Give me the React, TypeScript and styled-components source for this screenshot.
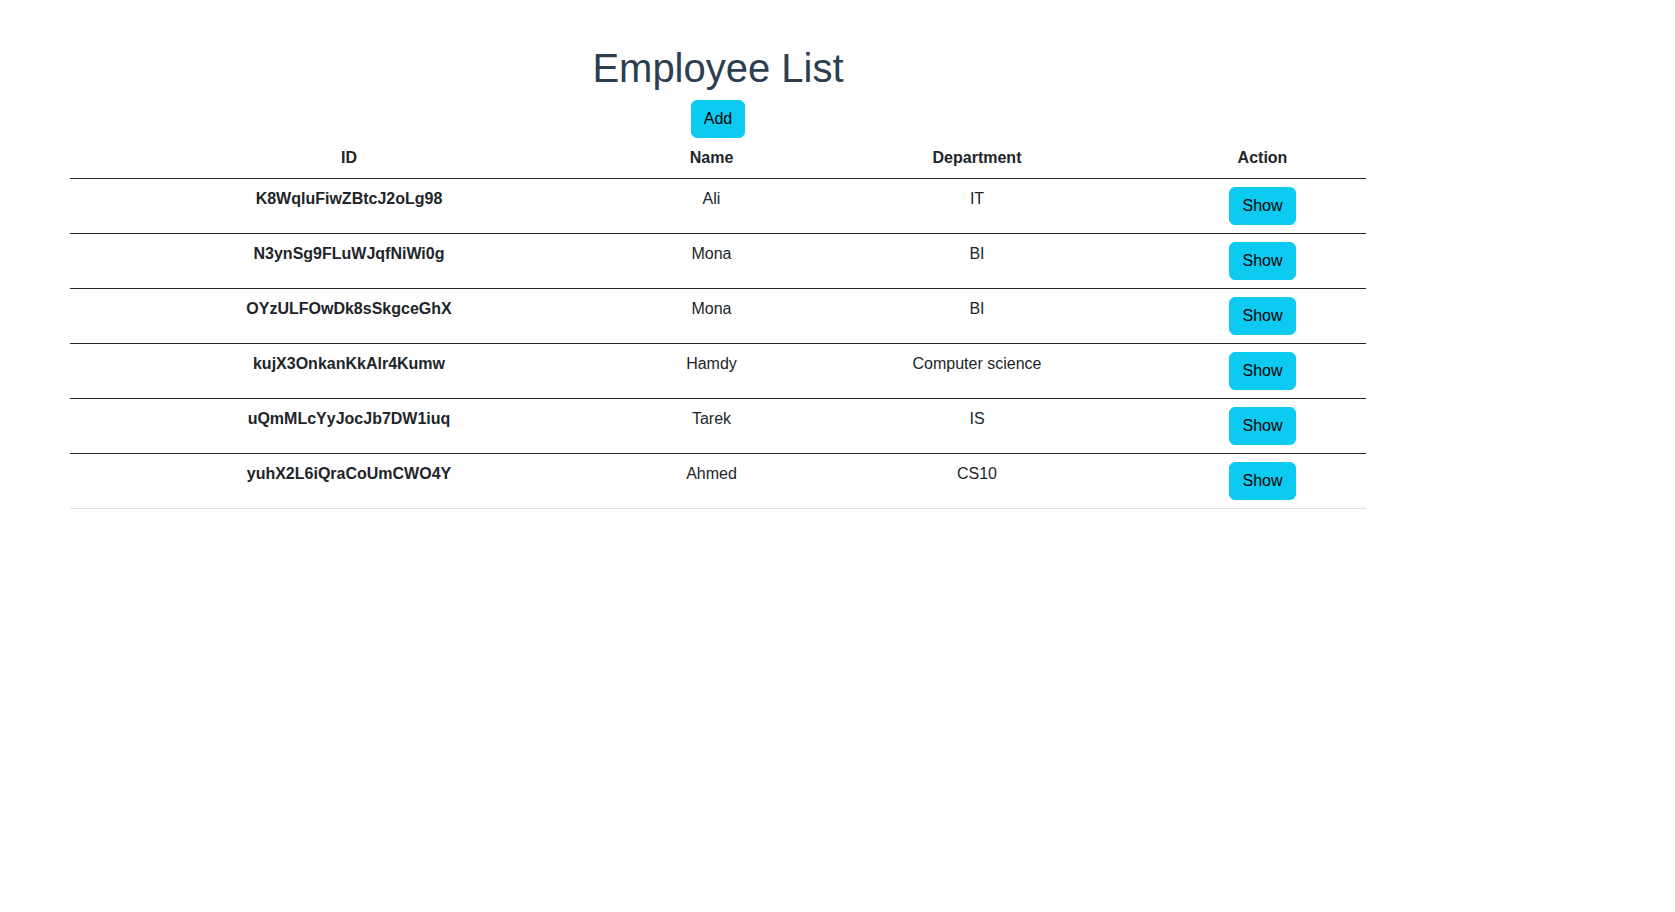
import styled, { createGlobalStyle } from 'styled-components';

type Employee = {
    id: string;
    name: string;
    department: string;
};

const employees: Employee[] = [
    { id: 'K8WqluFiwZBtcJ2oLg98', name: 'Ali', department: 'IT' },
    { id: 'N3ynSg9FLuWJqfNiWi0g', name: 'Mona', department: 'BI' },
    { id: 'OYzULFOwDk8sSkgceGhX', name: 'Mona', department: 'BI' },
    { id: 'kujX3OnkanKkAlr4Kumw', name: 'Hamdy', department: 'Computer science' },
    { id: 'uQmMLcYyJocJb7DW1iuq', name: 'Tarek', department: 'IS' },
    { id: 'yuhX2L6iQraCoUmCWO4Y', name: 'Ahmed', department: 'CS10' },
];

const columnWidths = [558, 167, 364, 207];

const GlobalStyle = createGlobalStyle`
    *, *::before, *::after {
        box-sizing: border-box;
    }
    body {
        margin: 0;
        background: #fff;
        font-family: "Liberation Sans", Arial, sans-serif;
        font-size: 16px;
        line-height: 1.5;
        color: #212529;
    }
`;

const App = () => {
    return (
        <>
            <GlobalStyle />
            <Page>
                <Content>
                    <Title>Employee List</Title>
                    <Toolbar>
                        <InfoButton>Add</InfoButton>
                    </Toolbar>
                    <Table>
                        <colgroup>
                            {columnWidths.map((w, i) => (
                                <col key={i} style={{ width: w }} />
                            ))}
                        </colgroup>
                        <thead>
                            <HeadRow>
                                <HeadCell>ID</HeadCell>
                                <HeadCell>Name</HeadCell>
                                <HeadCell>Department</HeadCell>
                                <HeadCell>Action</HeadCell>
                            </HeadRow>
                        </thead>
                        <tbody>
                            {employees.map((emp, i) => (
                                <BodyRow key={emp.id} $last={i === employees.length - 1}>
                                    <IdCell>{emp.id}</IdCell>
                                    <Cell>{emp.name}</Cell>
                                    <Cell>{emp.department}</Cell>
                                    <Cell>
                                        <InfoButton>Show</InfoButton>
                                    </Cell>
                                </BodyRow>
                            ))}
                        </tbody>
                    </Table>
                </Content>
            </Page>
        </>
    );
};

export default App;

const Page = styled.div`
    padding: 44px 0 0 70px;
    min-height: 912px;
`;

const Content = styled.div`
    width: 1296px;
    text-align: center;
`;

const Title = styled.h1`
    margin: 0 0 8px;
    font-size: 40px;
    font-weight: 400;
    line-height: 1.2;
    color: #2c3e50;
`;

const Toolbar = styled.div`
    display: flex;
    justify-content: center;
`;

const InfoButton = styled.button`
    display: inline-block;
    font-family: "Liberation Sans", Arial, sans-serif;
    font-size: 16px;
    line-height: 24px;
    padding: 6px 12px;
    color: #000;
    background-color: #0dcaf0;
    border: 1px solid #0dcaf0;
    border-radius: 6px;
    cursor: pointer;
    &:hover {
        background-color: #31d2f2;
    }
`;

const Table = styled.table`
    width: 1296px;
    table-layout: fixed;
    border-collapse: collapse;
    vertical-align: top;
    color: #212529;
`;

const HeadRow = styled.tr`
    border-bottom: 1px solid #212529;
`;

const HeadCell = styled.th`
    padding: 8px;
    font-weight: 700;
    text-align: center;
`;

const BodyRow = styled.tr<{ $last?: boolean }>`
    border-bottom: 1px solid ${(p) => (p.$last ? '#dee2e6' : '#212529')};
`;

const Cell = styled.td`
    padding: 8px;
    text-align: center;
    vertical-align: top;
`;

const IdCell = styled(Cell)`
    font-weight: 700;
`;
